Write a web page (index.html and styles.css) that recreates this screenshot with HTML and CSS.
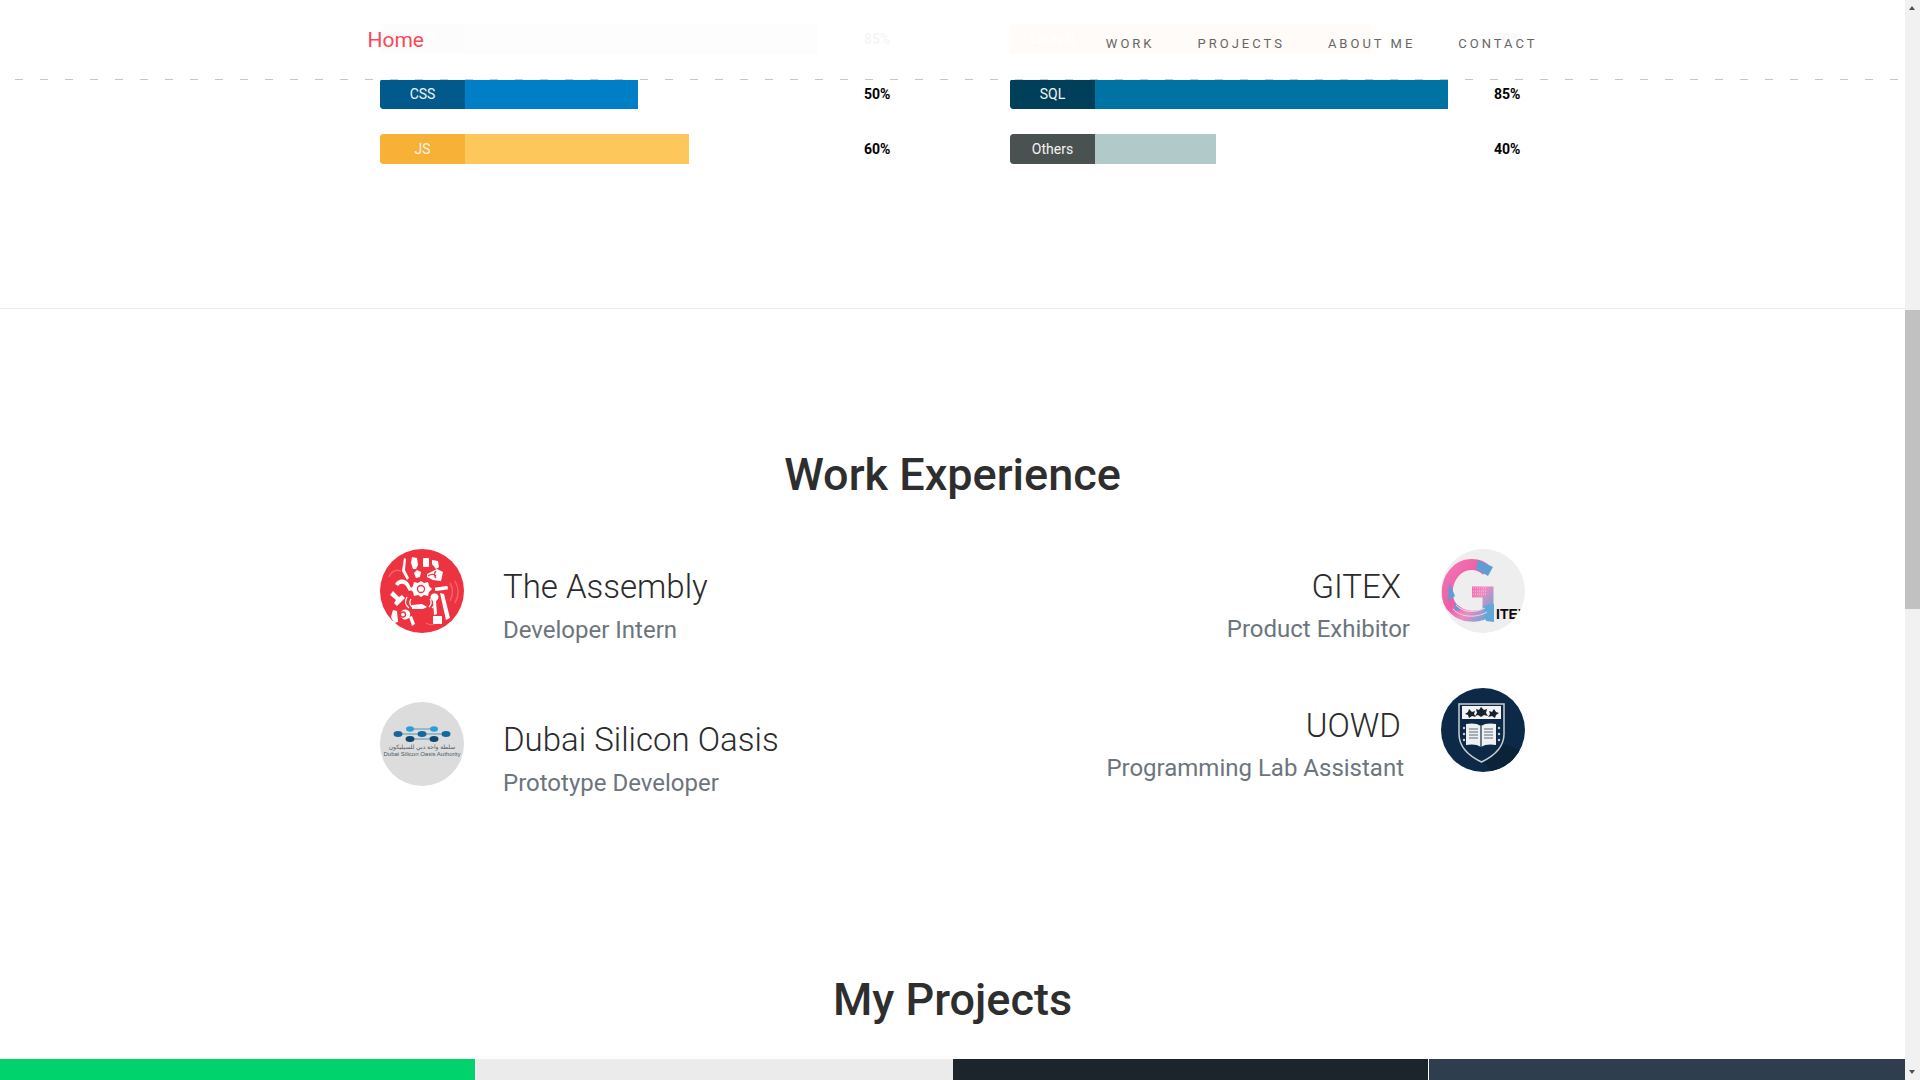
FILE: index.html
```html
<!DOCTYPE html>
<html lang="en">

<head>
    <meta charset="UTF-8">
    <meta name="viewport" content="width=device-width, initial-scale=1.0">
    <title>Portfolio</title>
    <link rel="stylesheet" href="styles.css">
</head>

<body>
    <div class="page">
        <header class="top-nav">
            <div class="nav-inner">
                <a class="nav-home">Home</a>
                <nav class="nav-links">
                    <a>WORK</a>
                    <a>PROJECTS</a>
                    <a>ABOUT ME</a>
                    <a>CONTACT</a>
                </nav>
            </div>
        </header>

        <section class="skills">
            <div class="container skills-grid">
                <div class="skill">
                    <div class="skill-track">
                        <div class="skill-bar bar-php" style="width: 85%"><span class="skill-name">PHP</span></div>
                    </div>
                    <span class="skill-value">85%</span>
                </div>
                <div class="skill">
                    <div class="skill-track">
                        <div class="skill-bar bar-laravel" style="width: 70%"><span class="skill-name">Laravel</span></div>
                    </div>
                    <span class="skill-value">70%</span>
                </div>
                <div class="skill">
                    <div class="skill-track">
                        <div class="skill-bar bar-css" style="width: 50%"><span class="skill-name">CSS</span></div>
                    </div>
                    <span class="skill-value">50%</span>
                </div>
                <div class="skill">
                    <div class="skill-track">
                        <div class="skill-bar bar-sql" style="width: 85%"><span class="skill-name">SQL</span></div>
                    </div>
                    <span class="skill-value">85%</span>
                </div>
                <div class="skill">
                    <div class="skill-track">
                        <div class="skill-bar bar-js" style="width: 60%"><span class="skill-name">JS</span></div>
                    </div>
                    <span class="skill-value">60%</span>
                </div>
                <div class="skill">
                    <div class="skill-track">
                        <div class="skill-bar bar-others" style="width: 40%"><span class="skill-name">Others</span></div>
                    </div>
                    <span class="skill-value">40%</span>
                </div>
            </div>
        </section>

        <section class="work">
            <h2 class="section-title">Work Experience</h2>
            <div class="container work-grid">
                <div class="work-col">
                    <div class="job">
                        <svg class="job-logo" viewBox="0 0 84 84">
                            <circle cx="42" cy="42" r="42" fill="#ee3340"/>
                            <path d="M70 34c3 5 3 12 0 18M75 32c4 7 4 15 0 22M9 28a9 9 0 0 1 12-6M46 74c3 2 7 2 10 0" fill="none" stroke="#f4626e" stroke-width="1.5"/>
                            <g fill="#fff">
                                <path d="M32 8l5 1 1 7-2 4-3 0-2-6z"/>
                                <path d="M24 9l2 1-1 11 4 8-2 2-5-9z"/>
                                <rect x="43" y="9" width="6" height="9" rx="1"/>
                                <path d="M52 11l6 1 1 6-3 2-4-5z"/>
                                <path d="M47 25l10-5 6 3-2 9-8-1-6-3z"/>
                                <path d="M37 21l4 2-1 5-4 1-2-5z"/>
                                <path d="M15 35c3-6 11-6 14 0l3 6-3 1-3-5c-2-3-6-3-8 0z"/>
                                <path d="M13 42l6 6 3-2 3 3-8 8-3-3 2-3-6-5z"/>
                                <path d="M38 34l3-2 3 2 4-1 1 4 3 3-3 3-1 4-4-1-3 2-3-2-4 1-1-4-3-3 3-3 1-4z"/>
                                <rect x="55" y="38" width="13" height="3.500" rx="1" transform="rotate(-8 60 40)"/>
                                <path d="M60 44l4 1 6 24-4 2z"/>
                                <path d="M53 52a4 4 0 1 1 3 0l1 13-3 1z"/>
                                <rect x="53" y="67" width="9" height="8"/>
                                <path d="M32 56l10-1 5 3-4 2-11 0z"/>
                                <path d="M13 61l4 1 1 11-4 1-3-6z"/>
                                <path d="M23 61a5 5 0 1 1 0 9a5 5 0 0 1 0-9z"/>
                                <path d="M29 68l3-1 3 8-3 2z"/>
                            </g>
                            <g fill="none" stroke="#ee3340" stroke-width="1.300">
                                <circle cx="41" cy="40" r="3.500"/>
                                <circle cx="23" cy="65.500" r="2.500"/>
                                <path d="M48 27c3-2 6-2 8 0M56 22c-2 2-2 5 0 7"/>
                            </g>
                            <path d="M27 48c-3 5-1 9 2 11M54 48c3 5 1 9-2 11M31 50c-2 3-1 6 1 8M50 50c2 3 1 6-1 8" fill="none" stroke="#fff" stroke-width="1.300"/>
                        </svg>
                        <div class="job-text">
                            <h3 class="job-title">The Assembly</h3>
                            <p class="job-role">Developer Intern</p>
                        </div>
                    </div>
                    <div class="job">
                        <svg class="job-logo" viewBox="0 0 84 84">
                            <circle cx="42" cy="42" r="42" fill="#dcdcdc"/>
                            <path d="M30 27h24M18 32h48M30 37h24" stroke="#5f93b5" stroke-width="1"/>
                            <g fill="#2aa0d8">
                                <ellipse cx="30" cy="27" rx="4" ry="2.800"/>
                                <ellipse cx="54" cy="27" rx="4" ry="2.800"/>
                            </g>
                            <g fill="#14689f">
                                <ellipse cx="18" cy="32" rx="4.500" ry="3"/>
                                <ellipse cx="42" cy="32" rx="4.500" ry="3"/>
                                <ellipse cx="66" cy="32" rx="4.500" ry="3"/>
                            </g>
                            <g fill="#10476f">
                                <ellipse cx="30" cy="37" rx="4.500" ry="3"/>
                                <ellipse cx="54" cy="37" rx="4.500" ry="3"/>
                            </g>
                            <text class="logo-small" x="42" y="47" text-anchor="middle">سلطة واحة دبي للسيليكون</text>
                            <text class="logo-small" x="42" y="54" text-anchor="middle">Dubai Silicon Oasis Authority</text>
                        </svg>
                        <div class="job-text">
                            <h3 class="job-title">Dubai Silicon Oasis</h3>
                            <p class="job-role">Prototype Developer</p>
                        </div>
                    </div>
                </div>

                <div class="work-col work-col-right">
                    <div class="job job-right">
                        <div class="job-text">
                            <h3 class="job-title">GITEX</h3>
                            <p class="job-role">Product Exhibitor</p>
                        </div>
                        <svg class="job-logo" viewBox="0 0 84 84">
                            <defs>
                                <clipPath id="gitexClip"><circle cx="42" cy="42" r="42"/></clipPath>
                                <linearGradient id="gitexFill" x1="0" y1="0" x2="1" y2="1">
                                    <stop offset="0" stop-color="#f277b4"/>
                                    <stop offset="0.45" stop-color="#f05aa6"/>
                                    <stop offset="0.7" stop-color="#ef8cc0"/>
                                    <stop offset="1" stop-color="#6aa5d6"/>
                                </linearGradient>
                            </defs>
                            <circle cx="42" cy="42" r="42" fill="#eeeeee"/>
                            <g clip-path="url(#gitexClip)">
                                <path d="M46 22C38 13 22 13 13 24C4 35 4 52 13 60C22 69 38 69 47 63V43H31" fill="none" stroke="url(#gitexFill)" stroke-width="11"/>
                                <path d="M8 33l6 14-7 5zM13 53l7 8-6 1z" fill="#5c9fd0"/>
                                <path d="M37 11l15 7-5 9-12-7z" fill="#5c9fd0"/>
                                <path d="M42 57l11-2v18l-8-1z" fill="#5fa8d8"/>
                                <path d="M12 60c8 9 24 9 34 3M15 56c7 8 20 8 29 3" fill="none" stroke="#fbd0e4" stroke-width="1"/>
                                <path d="M32 39h14M32 42h14M32 45h14" stroke="#f9c3dd" stroke-width="1" stroke-dasharray="1 1"/>
                                <text class="logo-itex" x="55" y="70">ITEX</text>
                            </g>
                        </svg>
                    </div>
                    <div class="job job-right">
                        <div class="job-text">
                            <h3 class="job-title">UOWD</h3>
                            <p class="job-role job-role-wide">Programming Lab Assistant</p>
                        </div>
                        <svg class="job-logo" viewBox="0 0 84 84">
                            <defs>
                                <clipPath id="uowdClip"><circle cx="42" cy="42" r="42"/></clipPath>
                            </defs>
                            <circle cx="42" cy="42" r="42" fill="#0c2a47"/>
                            <path d="M62 56L42 74 60 92 90 66z" fill="#0a2338" clip-path="url(#uowdClip)"/>
                            <path d="M18 16h45v30c0 14-10 22-22.500 28C28 68 18 60 18 46z" fill="#0c2a47" stroke="#c9ced3" stroke-width="1.500"/>
                            <path d="M21 18h39v13H21z" fill="#f4f4f4"/>
                            <g fill="#16222e">
                                <path d="M28 21l3 3 3-1-1 3 2 3-4-1-3 2-1-3-3-1 3-2z"/>
                                <path d="M40 19l3 3 3-1-1 4 2 3-4-1-3 2-3-2-3 1 2-3-1-4 3 1z"/>
                                <path d="M53 21l2 3 3 1-3 2-1 3-3-2-4 1 2-3-1-3 3 1z"/>
                            </g>
                            <path d="M40 38c-4-3-10-3-15-2v21c5-1 11-1 15 2c4-3 10-3 15-2V36c-5-1-11-1-15 2z" fill="#eef0f2"/>
                            <path d="M40 38v21" stroke="#0c2a47" stroke-width="1.200"/>
                            <path d="M28 41h9M28 44h9M28 47h9M28 50h9M43 41h9M43 44h9M43 47h9M43 50h9" stroke="#8d98a3" stroke-width="1.300"/>
                            <g fill="#c9ced3">
                                <circle cx="23" cy="40" r="1.200"/><circle cx="23" cy="46" r="1.200"/><circle cx="23" cy="52" r="1.200"/>
                                <circle cx="58" cy="40" r="1.200"/><circle cx="58" cy="46" r="1.200"/><circle cx="58" cy="52" r="1.200"/>
                            </g>
                        </svg>
                    </div>
                </div>
            </div>
        </section>

        <section class="projects">
            <h2 class="section-title">My Projects</h2>
            <div class="project-grid">
                <div class="project project-green"></div>
                <div class="project project-light"></div>
                <div class="project project-dark"></div>
                <div class="project project-slate"></div>
            </div>
        </section>
    </div>

    <div class="scrollbar">
        <div class="scroll-arrow scroll-up"></div>
        <div class="scroll-thumb"></div>
        <div class="scroll-arrow scroll-down"></div>
    </div>
</body>

</html>
```

FILE: styles.css
```css
body {
    display: flex;
    height: 100vh;
    margin: 0;
    overflow: hidden;
    background-color: #fff;
    font-family: "Roboto", "Liberation Sans", sans-serif;
}

.page {
    position: relative;
    flex: 1;
    min-width: 0;
    overflow: hidden;
}

/* fixed nav, the page is scrolled under it */
.top-nav {
    position: absolute;
    top: 0;
    left: 0;
    right: 0;
    z-index: 2;
    height: 80px;
    background-color: rgba(255, 255, 255, 0.96);
    background-image: repeating-linear-gradient(to right, #c6c6c6 0, #c6c6c6 8px, transparent 8px, transparent 25px);
    background-size: 100% 1px;
    background-position: 15px 79px;
    background-repeat: no-repeat;
}

.nav-inner {
    display: flex;
    justify-content: space-between;
    width: 1170px;
    margin: 0 auto;
}

.nav-home {
    margin-top: 27px;
    font-size: 21px;
    line-height: 26px;
    color: #fb4757;
}

.nav-links {
    display: flex;
    gap: 43px;
    margin-top: 36px;
    font-size: 13px;
    line-height: 16px;
    letter-spacing: 3px;
    color: #666;
}

.container {
    box-sizing: border-box;
    width: 1170px;
    margin: 0 auto;
    padding: 0 12.5px;
}

.skills {
    height: 309px;
    padding-top: 24px;
    box-sizing: border-box;
    border-bottom: 1px solid #ebebeb;
}

.skills-grid {
    display: grid;
    grid-template-columns: 630px 1fr;
    row-gap: 25px;
}

.skill {
    display: flex;
    align-items: center;
    height: 30px;
}

.skill-track {
    flex: none;
    width: 515px;
    margin-right: -31px;
}

.skill-bar {
    height: 30px;
    border-radius: 4px 0 0 4px;
}

.skill-name {
    display: block;
    width: 85px;
    height: 30px;
    border-radius: 4px 0 0 4px;
    font-size: 14px;
    line-height: 30px;
    text-align: center;
    color: #f4f4f4;
}

.skill-value {
    font-size: 14px;
    font-weight: 700;
    color: #000;
}

.bar-php { background-color: #bdbdbd; }
.bar-php .skill-name { background-color: #b4b4b4; }
.bar-laravel { background-color: #ffa270; }
.bar-laravel .skill-name { background-color: #fb9a66; }
.bar-css { background-color: #007fc6; }
.bar-css .skill-name { background-color: #015a8b; }
.bar-sql { background-color: #0072a3; }
.bar-sql .skill-name { background-color: #003f5a; }
.bar-js { background-color: #fdc75c; }
.bar-js .skill-name { background-color: #f7b135; }
.bar-others { background-color: #b2c9c9; }
.bar-others .skill-name { background-color: #4a5151; }

.work {
    padding-top: 141px;
}

.section-title {
    margin: 0;
    font-size: 45px;
    font-weight: 500;
    line-height: 50px;
    text-align: center;
    color: #2e2e2e;
}

.work-grid {
    display: flex;
    justify-content: space-between;
    margin-top: 49px;
}

.work-col {
    display: flex;
    flex-direction: column;
    gap: 56px;
}

.work-col-right {
    align-items: flex-end;
    gap: 42px;
}

.job {
    display: flex;
    gap: 39px;
    height: 97px;
}

.job-right {
    gap: 31px;
    text-align: right;
}

.job-logo {
    flex: none;
    width: 84px;
    height: 84px;
}

.job-text {
    padding-top: 18px;
}

.job-title {
    margin: 0;
    font-size: 33px;
    font-weight: 300;
    line-height: 40px;
    color: #2b2b2b;
}

.job-right .job-title {
    padding-right: 9px;
}

.job-role {
    margin: 6px 0 0;
    font-size: 24px;
    line-height: 34px;
    color: #6c757d;
}

.job-right .job-role {
    margin-top: 5px;
}

.job-role-wide {
    padding-right: 6px;
}

.logo-small {
    font-family: "Liberation Sans", "DejaVu Sans", sans-serif;
    font-size: 6px;
    fill: #4d5b66;
}

.logo-itex {
    font-family: "Liberation Sans", sans-serif;
    font-size: 14px;
    font-weight: 700;
    fill: #0b0b0b;
}

.projects {
    padding-top: 176px;
}

.project-grid {
    display: grid;
    grid-template-columns: repeat(4, 1fr);
    margin-top: 34px;
}

.project {
    box-sizing: border-box;
    height: 200px;
}

.project-green {
    background-color: #00d36b;
    border-right: 1px solid #fff;
}

.project-light { background-color: #ebebeb; }

.project-dark {
    background-color: #1d252c;
    border-right: 1px solid #fff;
}

.project-slate { background-color: #2f3e4e; }

.scrollbar {
    display: flex;
    flex-direction: column;
    flex: none;
    width: 15px;
    background-color: #f1f1f1;
}

.scroll-arrow {
    flex: none;
    width: 0;
    height: 0;
    margin-left: 4px;
    border-left: 3.5px solid transparent;
    border-right: 3.5px solid transparent;
}

.scroll-up {
    margin-top: 6px;
    border-bottom: 4px solid #505050;
}

.scroll-down {
    margin-top: 461px;
    border-top: 4px solid #505050;
}

.scroll-thumb {
    flex: none;
    height: 299px;
    margin-top: 300px;
    background-color: #c1c1c1;
}
```
